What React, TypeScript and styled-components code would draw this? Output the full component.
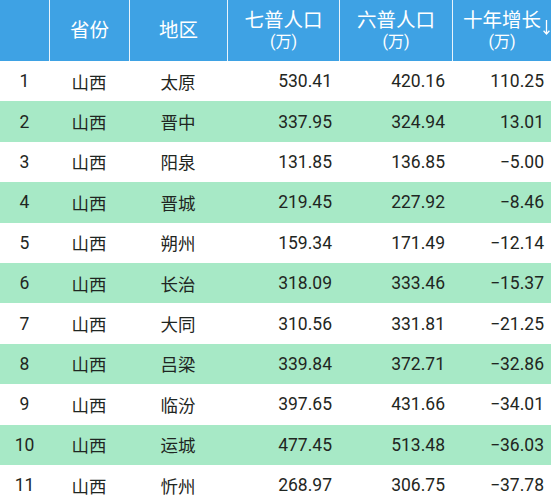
import styled, {createGlobalStyle} from 'styled-components'

const GlobalStyle = createGlobalStyle`
  body {
    margin: 0;
    background: #ffffff;
    font-family: Roboto, "Noto Sans CJK SC", sans-serif;
  }
`

const columns = '49px 80px 98px 112px 113px 99px'

const Table = styled.div`
  width: 551px;
  height: 500px;
  overflow: hidden;
`

const HeadRow = styled.div`
  display: grid;
  grid-template-columns: ${columns};
  height: 61px;
  background: #3ea2e4;
`

const HeadCell = styled.div`
  display: flex;
  flex-direction: column;
  align-items: center;
  justify-content: center;
  color: #ffffff;
  font-size: 19.5px;
  line-height: 22px;
  border-left: ${(p: {first?: boolean}) => (p.first ? 'none' : '1.5px solid #e8f4fc')};
`

const HeadTitle = styled.span`
  position: relative;
`

const Unit = styled.span`
  font-size: 16px;
  line-height: 20px;
`

const SortArrow = styled.svg`
  position: absolute;
  left: calc(100% + 2px);
  top: 9px;
  width: 7px;
  height: 16px;
`

const Row = styled.div<{$alt: boolean}>`
  display: grid;
  grid-template-columns: ${columns};
  height: 40.4px;
  align-items: center;
  background: ${(p) => (p.$alt ? '#a7e9c6' : '#ffffff')};
  color: #1f2622;
  font-size: 17.5px;
`

const Cell = styled.div<{$num?: boolean}>`
  text-align: ${(p) => (p.$num ? 'right' : 'center')};
  padding-right: ${(p) => (p.$num ? '7px' : '0')};
`

const rows: [string, string, string, string, string, string][] = [
  ['1', '山西', '太原', '530.41', '420.16', '110.25'],
  ['2', '山西', '晋中', '337.95', '324.94', '13.01'],
  ['3', '山西', '阳泉', '131.85', '136.85', '−5.00'],
  ['4', '山西', '晋城', '219.45', '227.92', '−8.46'],
  ['5', '山西', '朔州', '159.34', '171.49', '−12.14'],
  ['6', '山西', '长治', '318.09', '333.46', '−15.37'],
  ['7', '山西', '大同', '310.56', '331.81', '−21.25'],
  ['8', '山西', '吕梁', '339.84', '372.71', '−32.86'],
  ['9', '山西', '临汾', '397.65', '431.66', '−34.01'],
  ['10', '山西', '运城', '477.45', '513.48', '−36.03'],
  ['11', '山西', '忻州', '268.97', '306.75', '−37.78'],
]

export default function App() {
  return (
    <>
      <GlobalStyle />
      <Table>
        <HeadRow>
          <HeadCell first />
          <HeadCell>省份</HeadCell>
          <HeadCell>地区</HeadCell>
          <HeadCell>
            <span>七普人口</span>
            <Unit>(万)</Unit>
          </HeadCell>
          <HeadCell>
            <span>六普人口</span>
            <Unit>(万)</Unit>
          </HeadCell>
          <HeadCell>
            <HeadTitle>
              十年增长
              <SortArrow viewBox="0 0 7 16" fill="none" stroke="#ffffff" strokeWidth="1.3">
                <path d="M3.5 1 V15 M0.6 11.8 L3.5 15 L6.4 11.8" />
              </SortArrow>
            </HeadTitle>
            <Unit>(万)</Unit>
          </HeadCell>
        </HeadRow>
        {rows.map((r, i) => (
          <Row key={r[0]} $alt={i % 2 === 1}>
            <Cell>{r[0]}</Cell>
            <Cell>{r[1]}</Cell>
            <Cell>{r[2]}</Cell>
            <Cell $num>{r[3]}</Cell>
            <Cell $num>{r[4]}</Cell>
            <Cell $num>{r[5]}</Cell>
          </Row>
        ))}
      </Table>
    </>
  )
}
